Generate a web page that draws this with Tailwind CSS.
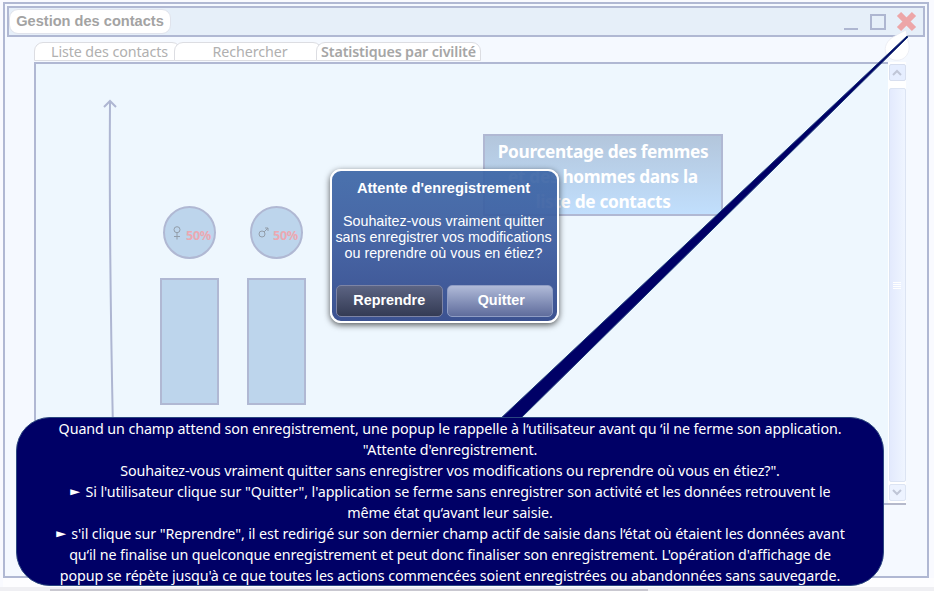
<!DOCTYPE html>
<html lang="fr">
<head>
<meta charset="utf-8">
<title>Gestion des contacts</title>
<script src="https://cdn.jsdelivr.net/npm/@tailwindcss/browser@4"></script>
</head>
<body class="relative w-[934px] h-[591px] overflow-hidden bg-[#fafbff] font-['Noto_Sans',sans-serif]">
<div class="h-[587px] pt-[2px] pl-[3px] bg-[#f9faff]">
  <main class="flex flex-col w-[926px] h-[576px] border-2 border-[#b0b8d3] bg-[#f5f9ff] pt-[2px] px-[2px]">
    <header class="flex items-center justify-between h-[31px] shrink-0 border-2 border-[#b0b8d3] bg-[#e6eff9] pr-[6px]">
      <h1 class="flex items-center justify-center w-[162px] h-[25px] rounded-[9px] border border-[#e0e3ec] bg-white font-['Liberation_Sans',sans-serif] font-bold text-[14.6px] text-[#a3a3a3] whitespace-nowrap pt-px">Gestion des contacts</h1>
      <div class="flex items-center">
        <svg class="w-[16px] h-[22px]" viewBox="0 0 16 22"><path d="M1 18H15" stroke="#aeb6d1" stroke-width="2"/></svg>
        <svg class="w-[16px] h-[17px] ml-[11px] mr-px" viewBox="0 0 16 17"><path d="M1 2H15V16H1Z" fill="none" stroke="#aeb6d1" stroke-width="2"/></svg>
        <svg class="w-[21px] h-[21px] ml-[9px]" viewBox="0 0 21 21"><path d="M3 3L18 18M18 3L3 18" stroke="#eda6a8" stroke-width="6"/></svg>
      </div>
    </header>
    <nav class="flex h-[19px] mt-[5px] ml-[27px] shrink-0 text-[14.3px] text-[#b0b0b0] leading-[18px] whitespace-nowrap">
      <div class="w-[147px] rounded-t-[9px] border border-[#dcdde2] bg-white pl-[16px] tracking-[-0.1px]">Liste des contacts</div>
      <div class="w-[148px] -ml-[7px] rounded-t-[9px] border border-[#dcdde2] bg-white pl-[4px] text-center tracking-[-0.1px]">Rechercher</div>
      <div class="w-[165px] -ml-[6px] rounded-t-[9px] border border-[#dcdde2] bg-white text-center font-semibold text-[#a6a6a6] tracking-[-0.15px]">Statistiques par civilité</div>
    </nav>
    <div class="flex h-[443px] mt-px ml-[27px] shrink-0">
      <section class="relative w-[854px] border-t-2 border-l-2 border-b-2 border-[#b0b8d3] bg-[#eef7fe]">
        <svg class="absolute left-0 top-0 w-[852px] h-[439px]" viewBox="36 64 852 439">
          <path d="M110 101Q109 240 113 430M104 107L110 101L116 107" fill="none" stroke="#aeb6d2" stroke-width="2"/>
        </svg>
        <div class="flex gap-[28px] pl-[124px] pt-[142px]">
          <div class="flex flex-col items-center w-[59px]">
            <div class="flex items-center justify-end pr-[3px] gap-[5px] size-[53px] rounded-full border-2 border-[#b0b8d3] bg-[#bdd5ec]">
              <svg class="w-[8px] h-[14px]" viewBox="0 0 8 14" fill="none" stroke="#929da9"><circle cx="4" cy="3.7" r="3"/><path d="M4 7V13.5M1 10.5H7"/></svg>
              <b class="text-[12.7px] font-bold text-[#eba9b2] tracking-[-0.3px] pt-[6px]">50%</b>
            </div>
            <div class="w-[59px] h-[127px] mt-[19px] border-2 border-[#b0b8d3] bg-[#bdd5ec]"></div>
          </div>
          <div class="flex flex-col items-center w-[59px]">
            <div class="flex items-center justify-end pr-[3px] gap-[4px] size-[53px] rounded-full border-2 border-[#b0b8d3] bg-[#bdd5ec]">
              <svg class="w-[11px] h-[11px]" viewBox="0 0 11 11" fill="none" stroke="#929da9"><circle cx="4" cy="7" r="3"/><path d="M6 5L10 1M7 1H10V4"/></svg>
              <b class="text-[12.7px] font-bold text-[#eba9b2] tracking-[-0.3px] pt-[6px]">50%</b>
            </div>
            <div class="w-[59px] h-[127px] mt-[19px] border-2 border-[#b0b8d3] bg-[#bdd5ec]"></div>
          </div>
        </div>
        <div class="absolute left-[447px] top-[70px] w-[240px] h-[82px] border-2 border-[#b0b8d3] bg-linear-to-b from-[#b3c6dc] to-[#c1dffd] pt-[3px] text-center font-bold text-[17.3px] leading-[25px] tracking-[-0.35px] text-white whitespace-nowrap">Pourcentage des femmes<br>et des hommes dans la<br>liste de contacts</div>
      </section>
      <aside class="flex flex-col items-center w-[18px] border-b-2 border-[#b5b9cb] bg-white">
        <div class="flex items-center justify-center w-[17px] h-[17px] mt-[2px] border border-[#d8dfef] rounded-[2px] bg-[#e6eeff]"><svg class="w-[10px] h-[7px]" viewBox="0 0 10 7"><path d="M1 6L5 2L9 6" fill="none" stroke="#c0c6d7" stroke-width="2"/></svg></div>
        <div class="flex items-center justify-center w-[17px] h-[394px] mt-[7px] border border-[#dce4f3] rounded-[2px] bg-linear-to-r from-[#e3eafd] to-[#eff5ff]">
          <div class="flex flex-col gap-px"><i class="block w-[8px] h-px bg-white"></i><i class="block w-[8px] h-px bg-white"></i><i class="block w-[8px] h-px bg-white"></i><i class="block w-[8px] h-px bg-white"></i></div>
        </div>
        <div class="flex items-center justify-center w-[17px] h-[17px] mt-[2px] border border-[#dce4f3] rounded-[2px] bg-[#edf3ff]"><svg class="w-[10px] h-[7px]" viewBox="0 0 10 7"><path d="M1 1L5 5L9 1" fill="none" stroke="#c0c6d7" stroke-width="2"/></svg></div>
      </aside>
    </div>
  </main>
  <div class="h-[9px] bg-[#fdfdff]"></div>
</div>
<div class="h-[4px] bg-[#efeff3] pt-[2px]"><div class="ml-[50px] w-[598px] h-[2px] bg-[#c9c8d0]"></div></div>

<div class="absolute left-[330px] top-[169px] w-[229px] h-[154px] rounded-[11px] border-2 border-white bg-linear-to-b from-[#3c66a6]/92 via-[#3c5b9e]/94 to-[#3c5291] shadow-[0_2px_6px_rgba(0,0,0,0.65)] px-[4px] pt-[8px] font-['Liberation_Sans',sans-serif] text-white text-center whitespace-nowrap">
  <h2 class="font-bold text-[14.7px] leading-[18px] -ml-[2px]">Attente d'enregistrement</h2>
  <p class="flex flex-col items-center mt-[16px] -ml-[2px] text-[14.3px] leading-[16px]"><span>Souhaitez-vous vraiment quitter</span><span>sans enregistrer vos modifications</span><span>ou reprendre où vous en étiez?</span></p>
  <div class="flex gap-[4px] mt-[24px]">
    <button class="w-[107px] h-[32px] rounded-[5px] border border-[#7d84a5] bg-linear-to-b from-[#5c6483] to-[#343b54] font-bold text-[14.4px]">Reprendre</button>
    <button class="w-[107px] h-[32px] rounded-[5px] border border-[#8f9dc4] bg-linear-to-b from-[#b0bad8] to-[#606d9c] font-bold text-[14.4px] pl-[3px]">Quitter</button>
  </div>
</div>

<svg class="absolute left-0 top-0 w-[934px] h-[591px]" viewBox="0 0 934 591">
  <path d="M906 30L893 37C882 44 883 57 894 60C905 62 912 52 908 41Z" fill="#fff" stroke="#e6e8ef" stroke-width=".7"/>
  <path d="M499 420L519 420L908 37L907 36Z" fill="#000066" stroke="#1d3c78" stroke-width="1"/>
</svg>
<div class="absolute left-[16px] top-[417px] w-[868px] h-[169px] rounded-[34px] border border-[#2b477f] bg-[#000066] flex flex-col items-center text-white text-[14.3px] leading-[21px] tracking-[-0.1px] whitespace-nowrap">
  <span class="h-[21px]">Quand un champ attend son enregistrement, une popup le rappelle à l‘utilisateur avant qu ‘il ne ferme son application.</span>
  <span class="h-[21px]">"Attente d'enregistrement.</span>
  <span class="h-[21px]">Souhaitez-vous vraiment quitter sans enregistrer vos modifications ou reprendre où vous en étiez?".</span>
  <span class="flex h-[21px] gap-[4px]"><span class="inline-block w-[12px] scale-x-[1.5] scale-y-90 text-[11px] leading-[20px] text-center">►</span><span>Si l'utilisateur clique sur "Quitter", l'application se ferme sans enregistrer son activité et les données retrouvent le</span></span>
  <span class="h-[21px]">même état qu‘avant leur saisie.</span>
  <span class="flex h-[21px] gap-[4px]"><span class="inline-block w-[12px] scale-x-[1.5] scale-y-90 text-[11px] leading-[20px] text-center">►</span><span>s'il clique sur "Reprendre", il est redirigé sur son dernier champ actif de saisie dans l‘état où étaient les données avant</span></span>
  <span class="h-[21px]">qu‘il ne finalise un quelconque enregistrement et peut donc finaliser son enregistrement. L'opération d'affichage de</span>
  <span class="h-[21px]">popup se répète jusqu'à ce que toutes les actions commencées soient enregistrées ou abandonnées sans sauvegarde.</span>
</div>
</body>
</html>
